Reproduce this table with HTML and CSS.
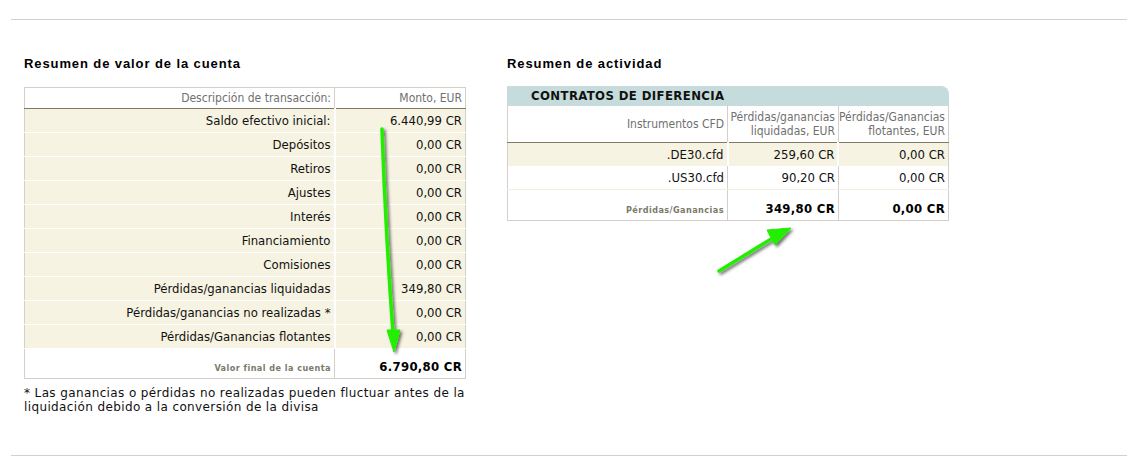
FILE: index.html
```html
<!DOCTYPE html>
<html>
<head>
<meta charset="utf-8">
<link rel="stylesheet" href="styles.css">
</head>
<body>
<div class="page">
  <div class="rule"></div>
  <div class="cols">
    <section class="left">
      <h2 class="title">Resumen de valor de la cuenta</h2>
      <table class="tbl acct">
        <thead>
          <tr><th class="c1">Descripción de transacción:</th><th class="c2">Monto, EUR</th></tr>
        </thead>
        <tbody>
          <tr><td>Saldo efectivo inicial:</td><td>6.440,99 CR</td></tr>
          <tr><td>Depósitos</td><td>0,00 CR</td></tr>
          <tr><td>Retiros</td><td>0,00 CR</td></tr>
          <tr><td>Ajustes</td><td>0,00 CR</td></tr>
          <tr><td>Interés</td><td>0,00 CR</td></tr>
          <tr><td>Financiamiento</td><td>0,00 CR</td></tr>
          <tr><td>Comisiones</td><td>0,00 CR</td></tr>
          <tr><td>Pérdidas/ganancias liquidadas</td><td>349,80 CR</td></tr>
          <tr><td>Pérdidas/ganancias no realizadas *</td><td>0,00 CR</td></tr>
          <tr><td>Pérdidas/Ganancias flotantes</td><td>0,00 CR</td></tr>
          <tr class="total"><td class="tl">Valor final de la cuenta</td><td class="tv">6.790,80 CR</td></tr>
        </tbody>
      </table>
      <p class="note">* Las ganancias o pérdidas no realizadas pueden fluctuar antes de la liquidación debido a la conversión de la divisa</p>
    </section>
    <section class="right">
      <h2 class="title">Resumen de actividad</h2>
      <div class="bar">CONTRATOS DE DIFERENCIA</div>
      <table class="tbl act">
        <thead>
          <tr><th class="a1">Instrumentos CFD</th><th class="a2">Pérdidas/ganancias liquidadas, EUR</th><th class="a3">Pérdidas/Ganancias flotantes, EUR</th></tr>
        </thead>
        <tbody>
          <tr class="odd"><td>.DE30.cfd</td><td>259,60 CR</td><td>0,00 CR</td></tr>
          <tr class="even"><td>.US30.cfd</td><td>90,20 CR</td><td>0,00 CR</td></tr>
          <tr class="total"><td class="tl">Pérdidas/Ganancias</td><td class="tv">349,80 CR</td><td class="tv">0,00 CR</td></tr>
        </tbody>
      </table>
    </section>
  </div>
  <div class="rule bottom"></div>
</div>
<svg class="arrows" width="1127" height="476" viewBox="0 0 1127 476">
  <defs>
    <filter id="sh" x="-50%" y="-50%" width="200%" height="200%">
      <feDropShadow dx="2" dy="2" stdDeviation="1.6" flood-color="#000" flood-opacity="0.55"/>
    </filter>
  </defs>
  <g filter="url(#sh)" fill="#22ee00" stroke="#22ee00">
    <path d="M382 129 L384 180 L387 240 L390 290 L393 334" fill="none" stroke-width="3.5" stroke-linecap="round"/>
    <polygon points="387,330 400,330 394,352" stroke-width="1"/>
    <path d="M719 271 L776 236" fill="none" stroke-width="3.5" stroke-linecap="round"/>
    <polygon points="767,230 791,228 775,245" stroke-width="1"/>
  </g>
</svg>
</body>
</html>
```

FILE: styles.css
```css
html, body {
  margin: 0;
  padding: 0;
  background: #ffffff;
}
.page {
  width: 1127px;
  height: 476px;
  padding-top: 19px;
  box-sizing: border-box;
  font-family: Tahoma, "DejaVu Sans Condensed", "DejaVu Sans", sans-serif;
}
.rule {
  margin-left: 11px;
  height: 1px;
  background: #d2d0cc;
}
.cols {
  display: flex;
  padding-left: 24px;
  height: 435px;
  box-sizing: border-box;
}
.left {
  width: 442px;
}
.right {
  width: 442px;
  margin-left: 41px;
}
.title {
  font-family: "Liberation Sans", Arial, sans-serif;
  font-size: 13px;
  letter-spacing: 0.9px;
  font-weight: bold;
  color: #000;
  margin: 36px 0 0 0;
  height: 15px;
  line-height: 15px;
}
.tbl {
  border-collapse: collapse;
  width: 442px;
  font-size: 13px;
  color: #111;
}
.acct {
  margin-top: 16px;
  border: 1px solid #d4d0c8;
}
.tbl th {
  font-weight: normal;
  color: #707070;
  text-align: right;
  font-size: 12px;
  padding: 0 3px 0 0;
  border-bottom: 1px solid #7f7a66;
}
.acct th {
  height: 20px;
}
.acct .c1 {
  width: 306px;
  border-right: 1px solid #d4d0c8;
}
.tbl td {
  text-align: right;
  padding: 0 3px 0 0;
}
.acct tbody tr td {
  background: #f6f3e2;
  height: 23px;
  border-bottom: 1px solid #ffffff;
}
.acct tbody tr td:first-child {
  border-right: 2px solid #ffffff;
}
.tbl tr.total td {
  background: #ffffff;
  height: 25px;
  border-bottom: none;
  vertical-align: bottom;
  padding-bottom: 4px;
}
.acct tr.total td:first-child {
  border-right: 1px solid #d4d0c8;
}
.tbl tr.total td.tl {
  font-size: 9px;
  letter-spacing: 0.45px;
  font-weight: bold;
  color: #7a7a6a;
  padding-bottom: 5px;
  height: 24px;
}
.tv {
  font-size: 13px;
  font-weight: bold;
  color: #000;
  letter-spacing: 0.3px;
}
.note {
  margin: 7px 0 0 0;
  font-size: 12px;
  letter-spacing: 0.38px;
  line-height: 14px;
  color: #111;
  font-family: "DejaVu Sans", Verdana, sans-serif;
}
.bar {
  margin-top: 15px;
  height: 20px;
  line-height: 20px;
  background: #c6dcdc;
  border-top-right-radius: 8px;
  padding-left: 24px;
  font-size: 13px;
  letter-spacing: 0.4px;
  font-weight: bold;
  color: #111;
}
.act {
  border: 1px solid #d4d0c8;
  border-top: none;
}
.act th {
  height: 36px;
  line-height: 14px;
  vertical-align: middle;
  border-right: 1px solid #d4d0c8;
}
.act th.a3 {
  border-right: none;
}
.act .a1 { width: 217px; }
.act .a2 { width: 107px; }
.act tbody td {
  height: 23px;
  border-right: 1px solid #d4d0c8;
}
.act tbody td:last-child {
  border-right: none;
}
.act tr.odd td {
  background: #f6f3e2;
  border-right: 2px solid #ffffff;
}
.act tr.odd td:last-child {
  border-right: none;
}
.act tr.even td {
  background: #ffffff;
  border-bottom: 1px solid #f2efe0;
}
.act tr.total td {
  height: 26px;
}
.act tr.total td.tl {
  height: 25px;
}
.arrows {
  position: absolute;
  left: 0;
  top: 0;
  pointer-events: none;
}
```
